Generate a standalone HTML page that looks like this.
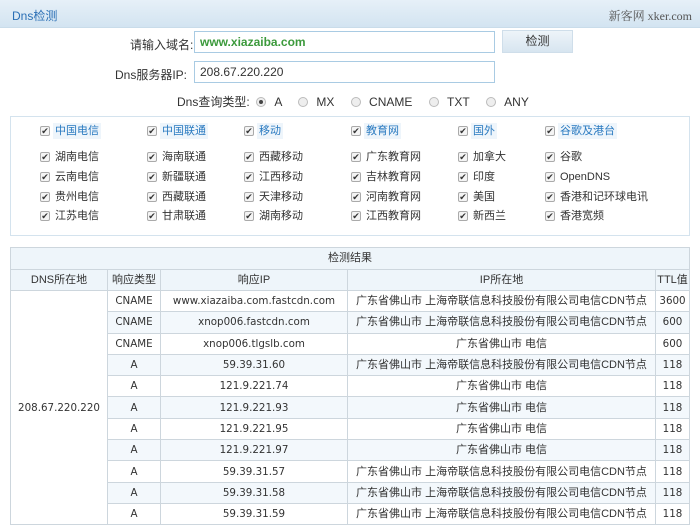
<!DOCTYPE html>
<html><head><meta charset="utf-8"><style>
*{margin:0;padding:0;box-sizing:border-box}
body{width:700px;height:529px;overflow:hidden;background:#fff;font-family:"Liberation Sans","Noto Sans CJK SC",sans-serif;font-size:12px;color:#333;position:relative}
.hdr{position:absolute;left:0;top:0;width:700px;height:28px;background:linear-gradient(#e6f0f8,#d3e4f1);border-bottom:1px solid #c9dcea}
.hdr .t{position:absolute;left:12px;top:7px;color:#2a6fb5;font-size:12px}
.hdr .r{position:absolute;right:8px;top:7px;font-family:"Liberation Serif","Noto Serif CJK SC",serif;font-size:12px;color:#555}
.abs{position:absolute;white-space:nowrap}
.inp{position:absolute;border:1px solid #a9cbe3;background:#fff;height:22px;padding:3px 5px;font-size:12px}
.btn{position:absolute;left:502px;top:30px;width:71px;height:23px;background:linear-gradient(#eef4f9,#d7e5f0);border:1px solid #cfdeea;text-align:center;line-height:21px;font-size:12px}
.rad{display:inline-block;width:10px;height:10px;border-radius:50%;border:1px solid #bbb;background:#eee;vertical-align:-1px;margin-right:8px;position:relative}
.rad.on::after{content:"";position:absolute;left:2px;top:2px;width:4px;height:4px;border-radius:50%;background:#444}
.panel{position:absolute;left:10px;top:116px;width:680px;height:120px;border:1px solid #d4e3ee}
.cb{position:absolute;width:10px;height:10px;border:1px solid #aaa;border-radius:2px;background:#f4f4f4;font-size:9px;line-height:8px;text-align:center;color:#333}
.lbl{position:absolute;font-size:11px;white-space:nowrap;line-height:16px}
.blue{color:#2a7ac0;background:#eef5fb;padding:0 2px}
table{position:absolute;left:10px;top:247px;width:680px;border-collapse:collapse;font-size:10.3px;table-layout:fixed;font-family:"DejaVu Sans","Noto Sans CJK SC",sans-serif}
td,th{border:1px solid #cdd6dd;text-align:center;font-weight:normal;height:21.3px;padding:0;white-space:nowrap;line-height:12px;overflow:hidden}
th,td.c{font-family:"Liberation Sans","Noto Sans CJK SC",sans-serif;font-size:11px}
th{background:#eef5fa;height:21.5px}
tr.e td{background:#f3f8fc}
tr.e td.l{background:#fff}
</style></head><body>
<div class="hdr"><span class="t">Dns检测</span><span class="r">新客网 xker.com</span></div>
<div class="abs" style="left:130px;top:36px">请输入域名:</div>
<div class="inp" style="left:194px;top:31px;width:301px;color:#3c9a3c;font-weight:bold">www.xiazaiba.com</div>
<div class="btn">检测</div>
<div class="abs" style="left:115px;top:66px">Dns服务器IP:</div>
<div class="inp" style="left:194px;top:61px;width:301px">208.67.220.220</div>
<div class="abs" style="left:177px;top:93px">Dns查询类型: &nbsp;<span class="rad on"></span>A &nbsp; &nbsp;&nbsp;<span class="rad"></span>MX &nbsp; &nbsp;&nbsp;<span class="rad"></span>CNAME &nbsp; &nbsp;&nbsp;<span class="rad"></span>TXT &nbsp; &nbsp;&nbsp;<span class="rad"></span>ANY</div>
<div class="panel"></div>
<div id="cbs"></div>
<table>
<colgroup><col style="width:97px"><col style="width:53px"><col style="width:187px"><col style="width:308px"><col></colgroup>
<tr><th colspan="5">检测结果</th></tr>
<tr><th>DNS所在地</th><th>响应类型</th><th>响应IP</th><th>IP所在地</th><th>TTL值</th></tr>
<tr><td class="l" rowspan="11">208.67.220.220</td><td>CNAME</td><td>www.xiazaiba.com.fastcdn.com</td><td class="c">广东省佛山市 上海帝联信息科技股份有限公司电信CDN节点</td><td>3600</td></tr>
<tr class="e"><td>CNAME</td><td>xnop006.fastcdn.com</td><td class="c">广东省佛山市 上海帝联信息科技股份有限公司电信CDN节点</td><td>600</td></tr>
<tr><td>CNAME</td><td>xnop006.tlgslb.com</td><td class="c">广东省佛山市 电信</td><td>600</td></tr>
<tr class="e"><td>A</td><td>59.39.31.60</td><td class="c">广东省佛山市 上海帝联信息科技股份有限公司电信CDN节点</td><td>118</td></tr>
<tr><td>A</td><td>121.9.221.74</td><td class="c">广东省佛山市 电信</td><td>118</td></tr>
<tr class="e"><td>A</td><td>121.9.221.93</td><td class="c">广东省佛山市 电信</td><td>118</td></tr>
<tr><td>A</td><td>121.9.221.95</td><td class="c">广东省佛山市 电信</td><td>118</td></tr>
<tr class="e"><td>A</td><td>121.9.221.97</td><td class="c">广东省佛山市 电信</td><td>118</td></tr>
<tr><td>A</td><td>59.39.31.57</td><td class="c">广东省佛山市 上海帝联信息科技股份有限公司电信CDN节点</td><td>118</td></tr>
<tr class="e"><td>A</td><td>59.39.31.58</td><td class="c">广东省佛山市 上海帝联信息科技股份有限公司电信CDN节点</td><td>118</td></tr>
<tr><td>A</td><td>59.39.31.59</td><td class="c">广东省佛山市 上海帝联信息科技股份有限公司电信CDN节点</td><td>118</td></tr>
</table>
<script>
var cols=[[40,55],[147,162],[244,259],[351,366],[458,473],[545,560]];
var rows=[131,157,177,197,216];
var d=[["中国电信","中国联通","移动","教育网","国外","谷歌及港台"],
["湖南电信","海南联通","西藏移动","广东教育网","加拿大","谷歌"],
["云南电信","新疆联通","江西移动","吉林教育网","印度","OpenDNS"],
["贵州电信","西藏联通","天津移动","河南教育网","美国","香港和记环球电讯"],
["江苏电信","甘肃联通","湖南移动","江西教育网","新西兰","香港宽频"]];
var h="";
for(var r=0;r<5;r++)for(var c=0;c<6;c++){
h+='<div class="cb" style="left:'+cols[c][0]+'px;top:'+(rows[r]-5)+'px">✔</div>';
h+='<div class="lbl'+(r==0?' blue':'')+'" style="left:'+(cols[c][1]-(r==0?2:0))+'px;top:'+(rows[r]-8)+'px">'+d[r][c]+'</div>';}
document.getElementById("cbs").innerHTML=h;
</script>
</body></html>
